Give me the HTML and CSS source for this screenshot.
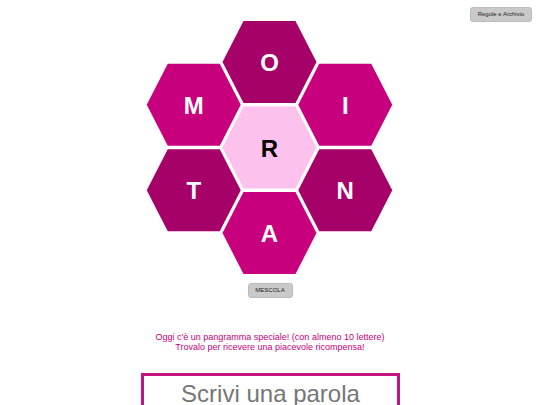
FILE: index.html
```html
<!DOCTYPE html>
<html lang="it">
<head>
<meta charset="utf-8">
<title>Pangramma</title>
<link rel="stylesheet" href="styles.css">
</head>
<body>
<header class="top">
  <button class="btn btn-rules">Regole e Archivio</button>
</header>
<svg class="board" viewBox="-124.5 -126.5 250 254" width="250" height="254">
  <defs>
    <polygon id="hex" points="-47,0 -26,-41 26,-41 47,0 26,41 -26,41"/>
  </defs>
  <g class="cell dark" transform="translate(0,-85.5)"><use href="#hex"/><text y="9">O</text></g>
  <g class="cell bright" transform="translate(-75.75,-42.75)"><use href="#hex"/><text y="9">M</text></g>
  <g class="cell bright" transform="translate(75.75,-42.75)"><use href="#hex"/><text y="9">I</text></g>
  <g class="cell center" transform="translate(0,0)"><use href="#hex"/><text y="9">R</text></g>
  <g class="cell dark" transform="translate(-75.75,42.75)"><use href="#hex"/><text y="9">T</text></g>
  <g class="cell dark" transform="translate(75.75,42.75)"><use href="#hex"/><text y="9">N</text></g>
  <g class="cell bright" transform="translate(0,85.5)"><use href="#hex"/><text y="9">A</text></g>
</svg>
<div class="actions">
  <button class="btn btn-shuffle">MESCOLA</button>
</div>
<p class="notice">Oggi c'è un pangramma speciale! (con almeno 10 lettere)<br>Trovalo per ricevere una piacevole ricompensa!</p>
<div class="entry">
  <input class="word" type="text" placeholder="Scrivi una parola">
</div>
</body>
</html>
```

FILE: styles.css
```css
html, body {
  margin: 0;
  padding: 0;
  background: #ffffff;
  font-family: "Liberation Sans", Arial, sans-serif;
  overflow: hidden;
}

.top {
  display: flex;
  justify-content: flex-end;
  padding: 7px 8px 0 0;
  height: 15px;
}

.btn {
  font-family: "Liberation Sans", Arial, sans-serif;
  background: #c9c9c9;
  border: 1px solid #bcbcbc;
  border-radius: 3px;
  color: #222;
  padding: 0;
  margin: 0;
  height: 15px;
  line-height: 13px;
  font-size: 6px;
}

.btn-rules {
  width: 62px;
}

.btn-shuffle {
  width: 45px;
}

.board {
  display: block;
  margin: -1px auto 0;
  overflow: visible;
}

.cell text {
  font-family: "Liberation Sans", Arial, sans-serif;
  font-weight: bold;
  font-size: 24px;
  text-anchor: middle;
  fill: #ffffff;
}

.dark use { fill: #a60069; }
.bright use { fill: #c9007d; }
.center use { fill: #fdc1ed; }
.center text { fill: #000000; }

.actions {
  display: flex;
  justify-content: center;
  margin-top: 8px;
}

.notice {
  margin: 34px 0 0;
  text-align: center;
  font-size: 9px;
  line-height: 10px;
  color: #c2007c;
}

.entry {
  display: flex;
  justify-content: center;
  margin-top: 21px;
  padding-left: 1px;
}

.word {
  box-sizing: border-box;
  width: 259px;
  height: 60px;
  border: 3px solid #c2137f;
  padding: 1px 4px 20px;
  margin: 0;
  outline: none;
  font-family: "Liberation Sans", Arial, sans-serif;
  font-size: 24px;
  text-align: center;
  color: #333;
  background: #fff;
}

.word::placeholder {
  color: #767676;
  opacity: 1;
}
```
